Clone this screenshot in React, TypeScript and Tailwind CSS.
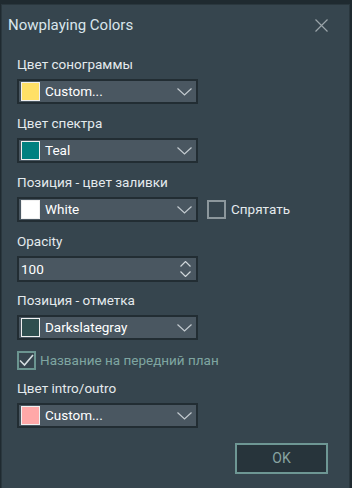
import { ReactNode } from 'react'

function Chevron({ className = '' }: { className?: string }) {
  return (
    <svg width="15" height="8" viewBox="0 0 15 8" className={className}>
      <path d="M0.5 0.5 L7.5 7 L14.5 0.5" fill="none" stroke="currentColor" strokeWidth="1.2" />
    </svg>
  )
}

function Label({ children }: { children: ReactNode }) {
  return <div className="h-[18px] leading-[18px] text-[13.5px] text-[#e4eaed] mb-[6px]">{children}</div>
}

function ColorSelect({ swatch, value }: { swatch: string; value: string }) {
  return (
    <div className="w-[181px] h-[25px] border-2 border-[#222d33] bg-[#4a5761] flex items-center pl-[2px] pr-[4px]">
      <div className="w-[19px] h-[19px] border border-[#f0f0f0]" style={{ backgroundColor: swatch }} />
      <span className="ml-[5px] text-[13.5px] text-white flex-1">{value}</span>
      <Chevron className="text-[#c3cacf]" />
    </div>
  )
}

function Group({ label, children, className = '' }: { label: string; children: ReactNode; className?: string }) {
  return (
    <div className={className}>
      <Label>{label}</Label>
      {children}
    </div>
  )
}

export default function App() {
  return (
    <div className="w-[352px] h-[488px] bg-[#1f2a30] overflow-hidden pt-[4px] pl-[1px]" style={{ fontFamily: 'Roboto, "Noto Sans", sans-serif' }}>
      <div className="w-[349px] h-[484px] border-l border-t border-r border-[#2a373e] bg-[#36454e] flex flex-col">
        <div className="h-[40px] flex items-center justify-between pl-[6px] pr-[21px]">
          <span className="text-[15px] text-[#d9e6ec]">Nowplaying Colors</span>
          <svg width="13" height="13" viewBox="0 0 13 13">
            <path d="M0.5 0.5 L12.5 12.5 M12.5 0.5 L0.5 12.5" stroke="#9aa4a9" strokeWidth="1.2" />
          </svg>
        </div>
        <div className="pl-[15px] pt-[10px] flex flex-col">
          <Group label="Цвет сонограммы">
            <ColorSelect swatch="#ffe066" value="Custom..." />
          </Group>
          <Group label="Цвет спектра" className="mt-[10px]">
            <ColorSelect swatch="#008080" value="Teal" />
          </Group>
          <Group label="Позиция - цвет заливки" className="mt-[10px]">
            <div className="flex items-center">
              <ColorSelect swatch="#ffffff" value="White" />
              <div className="ml-[9px] w-[19px] h-[19px] border-2 border-[#8c979c]" />
              <span className="ml-[5px] text-[13.5px] text-[#e4eaed]">Спрятать</span>
            </div>
          </Group>
          <Group label="Opacity" className="mt-[10px]">
            <div className="w-[181px] h-[26px] border-2 border-[#222d33] bg-[#4a5761] flex items-center pl-[2px] pr-[5px]">
              <span className="text-[13.5px] text-white flex-1">100</span>
              <div className="flex flex-col gap-[4px] text-[#d0d6da]">
                <svg width="11" height="6" viewBox="0 0 11 6">
                  <path d="M0.5 5.5 L5.5 0.5 L10.5 5.5" fill="none" stroke="currentColor" strokeWidth="1.2" />
                </svg>
                <svg width="11" height="6" viewBox="0 0 11 6">
                  <path d="M0.5 0.5 L5.5 5.5 L10.5 0.5" fill="none" stroke="currentColor" strokeWidth="1.2" />
                </svg>
              </div>
            </div>
          </Group>
          <Group label="Позиция - отметка" className="mt-[9px]">
            <ColorSelect swatch="#2f4f4f" value="Darkslategray" />
          </Group>
          <div className="mt-[11px] flex items-center h-[19px]">
            <div className="w-[19px] h-[19px] border-2 border-[#6b9590] flex items-center justify-center">
              <svg width="15" height="13" viewBox="0 0 15 13">
                <path d="M1 6.5 L5.5 11 L14 1" fill="none" stroke="#d5dde0" strokeWidth="1.6" />
              </svg>
            </div>
            <span className="ml-[4px] text-[13.5px] text-[#7fa5a1]">Название на передний план</span>
          </div>
          <Group label="Цвет intro/outro" className="mt-[9px]">
            <ColorSelect swatch="#ffa8a8" value="Custom..." />
          </Group>
          <div className="mt-[15px] ml-[218px] w-[93px] h-[31px] border-2 border-[#6e9794] bg-[#27343b] flex items-center justify-center">
            <span className="text-[14px] text-[#88a4a2]">OK</span>
          </div>
        </div>
      </div>
    </div>
  )
}
